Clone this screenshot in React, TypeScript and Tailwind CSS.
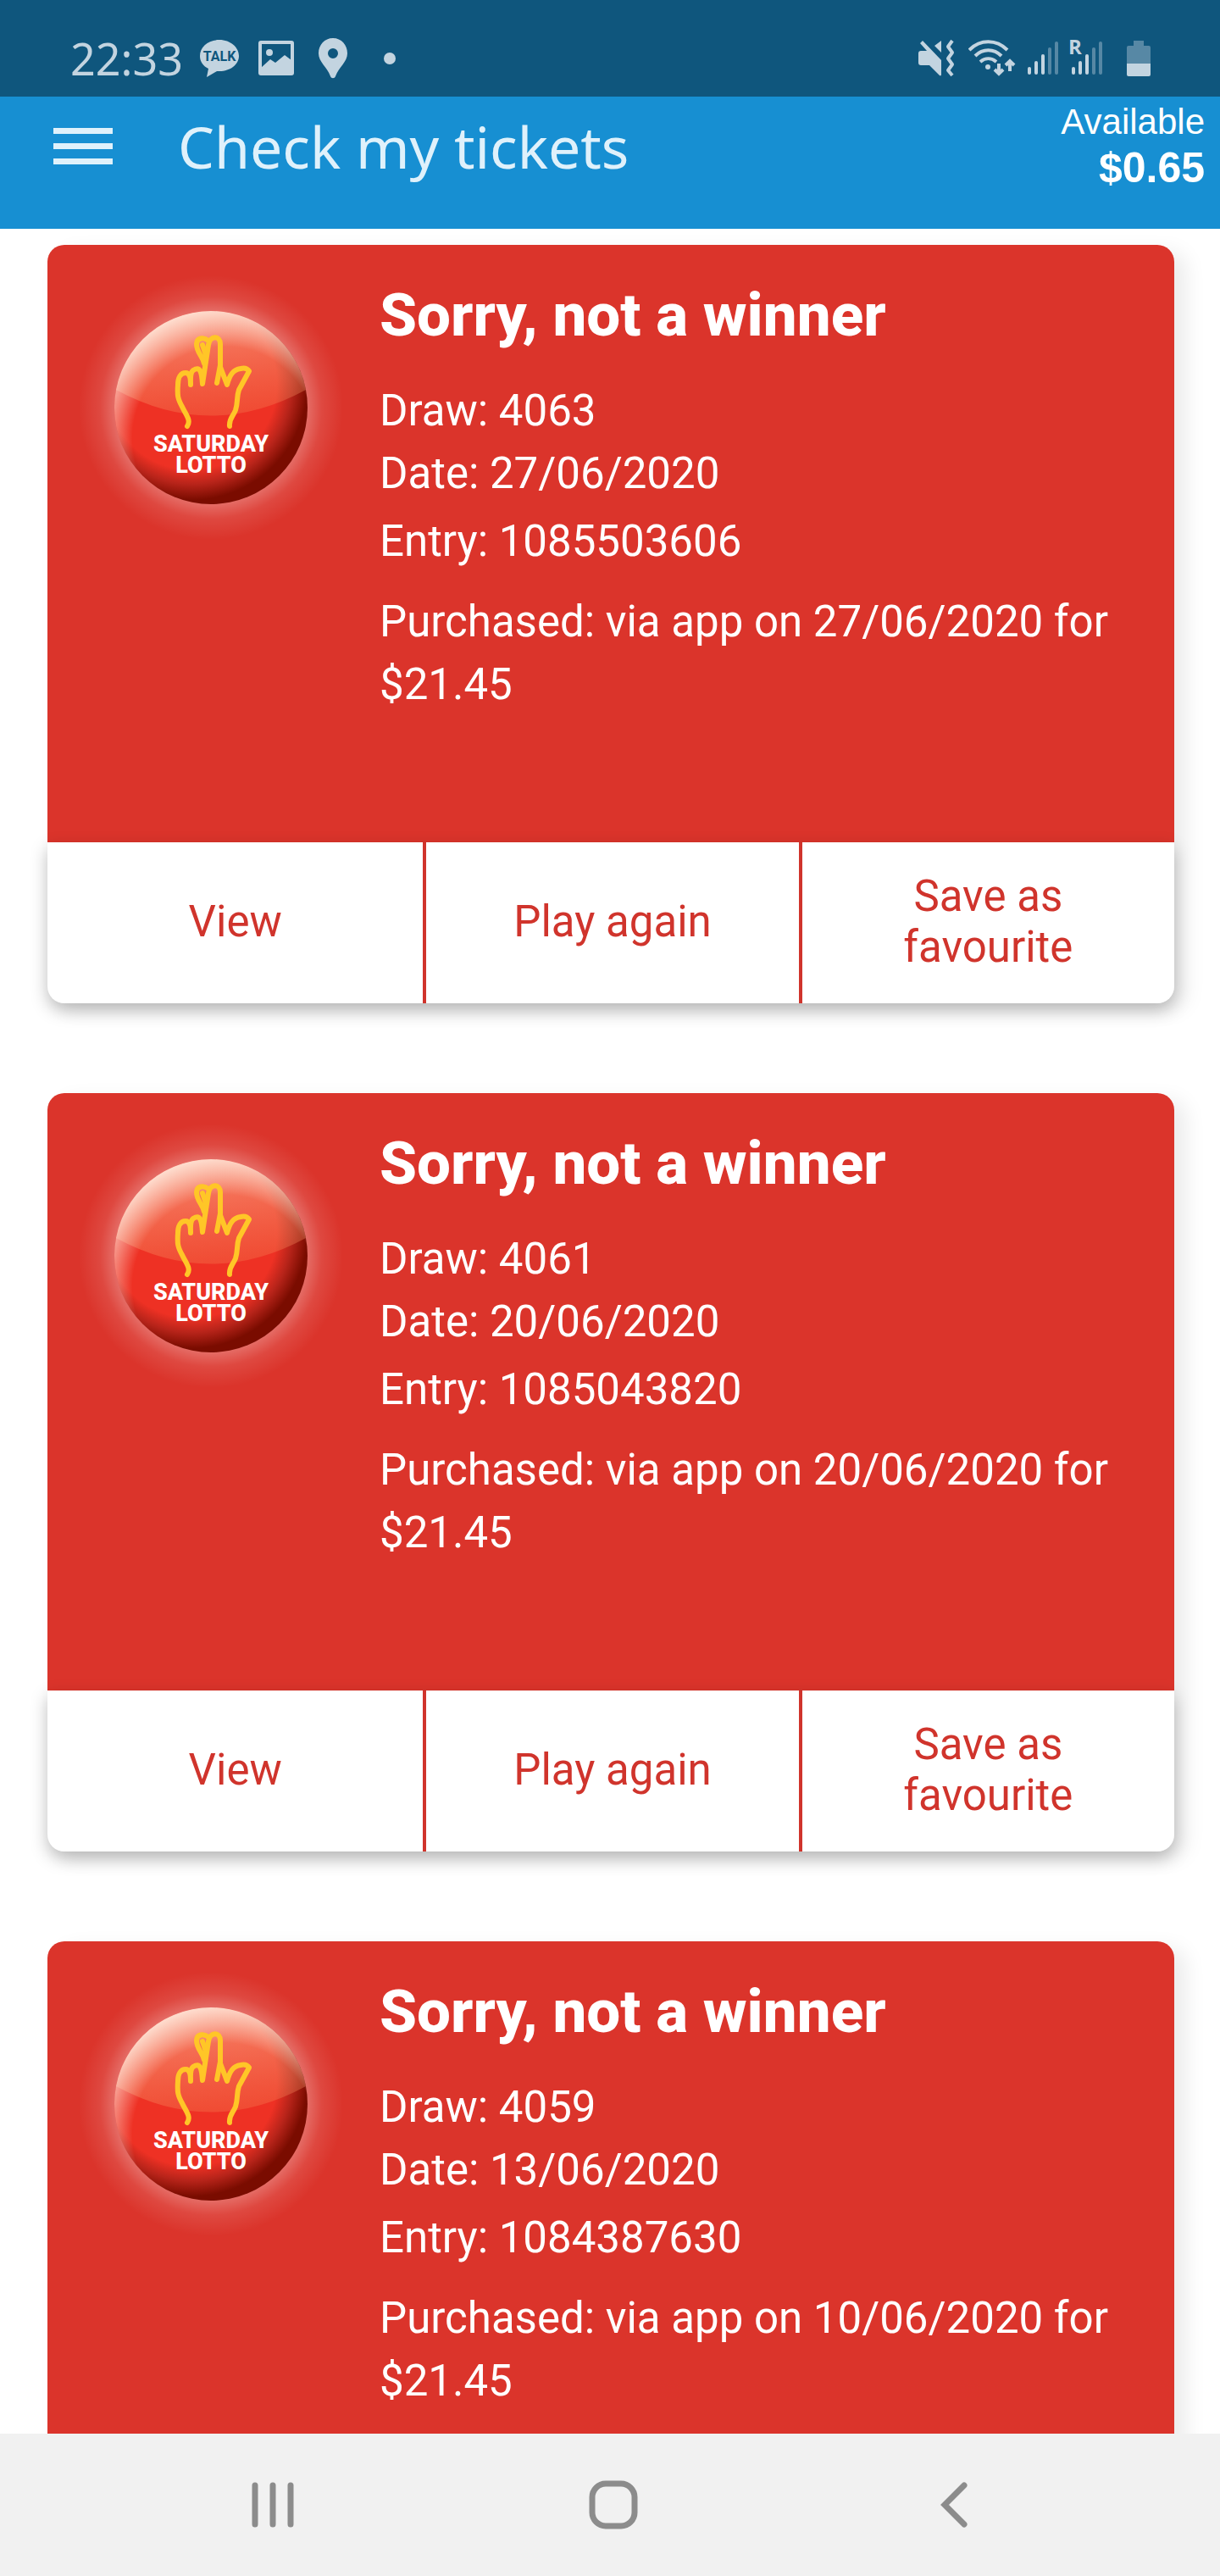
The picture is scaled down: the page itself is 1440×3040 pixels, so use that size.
import React from 'react';

const tickets = [
  { draw: '4063', date: '27/06/2020', entry: '1085503606', purchased: '27/06/2020', price: '$21.45' },
  { draw: '4061', date: '20/06/2020', entry: '1085043820', purchased: '20/06/2020', price: '$21.45' },
  { draw: '4059', date: '13/06/2020', entry: '1084387630', purchased: '10/06/2020', price: '$21.45' },
];

function SignalBars() {
  return (
    <svg width="36" height="42" viewBox="0 0 36 42" fill="currentColor" aria-hidden="true">
      <rect x="0" y="31" width="4" height="9" rx="2" />
      <rect x="8" y="24" width="4" height="16" rx="2" />
      <rect x="16" y="16" width="4" height="24" rx="2" />
      <rect x="24" y="8" width="4" height="32" rx="2" opacity="0.4" />
      <rect x="32" y="1" width="4" height="39" rx="2" opacity="0.4" />
    </svg>
  );
}

function StatusBar() {
  return (
    <div className="flex h-[114px] items-start justify-between bg-[#0f567d] pr-[82px] pl-[83px] text-[#c3d4e0]">
      <div className="mt-[46px] flex h-[46px] items-center">
        <span className="w-[132px] text-[52px] leading-[46px] font-['Noto_Sans',sans-serif]">22:33</span>
        <svg className="ml-[21px]" width="46" height="46" viewBox="0 0 46 46" aria-label="Talk message">
          <path fill="currentColor" d="M23 1C10 1 0 9 0 20c0 7 4 12 10 15L8 45l12-7h3c13 0 23-8 23-18S36 1 23 1Z" />
          <text x="23" y="26" textAnchor="middle" className="fill-[#0f567d] text-[16px] font-bold font-['Roboto',sans-serif]">TALK</text>
        </svg>
        <svg className="ml-[23px]" width="42" height="42" viewBox="0 0 42 42" aria-label="Image">
          <rect x="2" y="2" width="38" height="37" rx="1" fill="none" stroke="currentColor" strokeWidth="4" />
          <path fill="currentColor" d="M3 32l11-10 6 4 11-9 8 6v16H3Z" />
          <circle cx="13" cy="14" r="4" fill="currentColor" />
        </svg>
        <svg className="ml-[28px]" width="36" height="48" viewBox="0 0 36 48" aria-label="Location">
          <path fill="currentColor" fillRule="evenodd" d="M18 0C8 0 1 8 1 18c0 10 10 16 14 27 1 3 5 3 6 0 4-11 14-17 14-27C35 8 28 0 18 0Zm0 12a6 6 0 1 1 0 12 6 6 0 0 1 0-12Z" />
        </svg>
        <span className="ml-[42px] size-[14px] rounded-full bg-[#c3d4e0]" />
      </div>
      <div className="mt-[46px] flex h-[46px] items-center">
        <svg width="43" height="46" viewBox="0 0 43 46" aria-label="Vibrate">
          <path fill="currentColor" d="M5 2 27 25v17c0 1-1 2-2 1L13 31H3c-2 0-3-1-3-3V17c0-2 1-3 3-3h7L2 5ZM27 2v14l-8-8Z" />
          <path fill="none" stroke="currentColor" strokeWidth="4" strokeLinejoin="round" d="m40 2-5 7 5 7-5 7 5 7-5 7 5 6" />
        </svg>
        <svg className="ml-[16px]" width="56" height="46" viewBox="0 0 56 46" fill="none" stroke="currentColor" strokeWidth="4" aria-label="Wi-Fi">
          <path d="M1 13C14 0 33 0 46 13M8 20c9-9 22-9 31 0M14 27c6-5 13-5 19 0" />
          <circle cx="23" cy="33" r="3" fill="currentColor" stroke="none" />
          <path d="M36 29v12M31 36l5 5 5-5M49 38V26M44 31l5-5 5 5" />
        </svg>
        <div className="ml-[14px]"><SignalBars /></div>
        <div className="relative ml-[16px]">
          <SignalBars />
          <span className="absolute -top-1 -left-1 text-[24px] leading-[22px] font-bold font-['Open_Sans',sans-serif]">R</span>
        </div>
        <svg className="ml-[29px]" width="28" height="44" viewBox="0 0 28 44" fill="currentColor" aria-label="Battery">
          <path opacity="0.4" d="M8 1h12v6h6q2 0 2 2v19H0V9q0-2 2-2h6Z" />
          <path d="M0 28h28v13q0 2-2 2H2q-2 0-2-2Z" />
        </svg>
      </div>
    </div>
  );
}

function Header() {
  return (
    <header className="flex h-[156px] items-start bg-[#178fd2] pr-[18px] pl-[63px] text-white">
      <button type="button" aria-label="Menu" className="mt-[37px] flex w-[70px] flex-col gap-[11px]">
        <span className="h-[7px] w-full bg-[#dff1fb]" />
        <span className="h-[7px] w-full bg-[#dff1fb]" />
        <span className="h-[7px] w-full bg-[#dff1fb]" />
      </button>
      <h1 className="mt-[19px] ml-[77px] text-[68px] leading-[80px] text-[#dff1fb] font-['Noto_Sans',sans-serif]">
        Check my tickets
      </h1>
      <div className="ml-auto text-right font-['Liberation_Sans',Arial,sans-serif]">
        <p className="mt-[4px] text-[42px] leading-[52px]">Available</p>
        <p className="text-[50px] leading-[56px] font-bold">$0.65</p>
      </div>
    </header>
  );
}

function LottoBall() {
  return (
    <svg className="size-[312px] shrink-0" viewBox="0 0 312 312" role="img" aria-label="Saturday Lotto">
      <defs>
        <radialGradient id="halo">
          <stop offset="0.7" stopColor="#fff" stopOpacity="0.32" />
          <stop offset="0.84" stopColor="#fff" stopOpacity="0.1" />
          <stop offset="1" stopColor="#fff" stopOpacity="0" />
        </radialGradient>
        <radialGradient id="ball" cx="0.4" cy="0.38" r="0.63">
          <stop offset="0.7" stopColor="#ee3124" />
          <stop offset="0.82" stopColor="#b8241a" />
          <stop offset="0.95" stopColor="#7a0c00" />
        </radialGradient>
        <linearGradient id="gloss" x1="0.3" y1="0" x2="0.5" y2="1">
          <stop offset="0" stopColor="#ffc8a8" stopOpacity="0.6" />
          <stop offset="1" stopColor="#f58a58" stopOpacity="0.3" />
        </linearGradient>
        <radialGradient id="rim" cx="0.57" cy="0.66" r="0.68">
          <stop offset="0.7" stopColor="#ffeadd" stopOpacity="0" />
          <stop offset="0.98" stopColor="#ffeadd" stopOpacity="0.85" />
        </radialGradient>
      </defs>
      <circle cx="156" cy="156" r="156" fill="url(#halo)" />
      <circle cx="156" cy="156" r="114" fill="url(#ball)" />
      <path fill="url(#gloss)" d="M44 135a114 114 0 0 1 224 0Q156 196 44 135Z" />
      <circle cx="156" cy="156" r="114" fill="url(#rim)" />
      <g fill="none" stroke="#ffc627" strokeWidth="6" strokeLinecap="round" strokeLinejoin="round">
        <path d="M128 178c5-7-2-14-6-23-5-9-6-13-5-26 0-8 3-14 9-14 5 0 6 5 6 14 0-8-1-14 3-17 8-5 10 1 11 16l7-46c2-12 14-11 14-1v27l8 21c3-11 7-18 16-19 4-1 8 0 10 3l-12 22c-3 9-1 15-4 24-3 8-8 10-7 19" />
        <path d="M167 106l-4 21M148 104c-2-9-9-13-9-23 0-7 8-9 14-4M150 94l-4-12" />
      </g>
      <text textAnchor="middle" className="fill-white text-[27px] font-extrabold font-['Roboto',sans-serif]">
        <tspan x="156" y="208">SATURDAY</tspan>
        <tspan x="156" y="233">LOTTO</tspan>
      </text>
    </svg>
  );
}

function TicketCard({ ticket }: { ticket: (typeof tickets)[number] }) {
  return (
    <article className="mb-[106px] shrink-0 rounded-[20px] shadow-[14px_8px_24px_rgba(0,0,0,0.08)]">
      <div className="flex min-h-[705px] rounded-t-[20px] bg-[#db342b] pl-[37px] text-white">
        <div className="pt-[36px]"><LottoBall /></div>
        <div className="ml-[43px] flex-1 pt-[43px] pr-[40px] text-[51px] leading-[74px]">
          <h2 className="text-[71px] leading-[80px] font-extrabold">Sorry, not a winner</h2>
          <p className="mt-[36px]">Draw: {ticket.draw}</p>
          <p>Date: {ticket.date}</p>
          <p className="mt-[6px]">Entry: {ticket.entry}</p>
          <p className="mt-[21px]">
            Purchased: via app on {ticket.purchased} for {ticket.price}
          </p>
        </div>
      </div>
      <div className="grid h-[190px] grid-cols-3 rounded-b-[20px] bg-white text-[51px] leading-[60px] text-[#d0342c] shadow-[0_8px_20px_rgba(0,0,0,0.25)]">
        <button type="button" className="pb-[2px]">View</button>
        <button type="button" className="border-l-4 border-[#d0342c] pb-[2px]">Play again</button>
        <button type="button" className="border-l-4 border-[#d0342c] px-[80px] pb-[2px]">Save as favourite</button>
      </div>
    </article>
  );
}

function NavBar() {
  return (
    <nav className="flex h-[168px] shrink-0 items-center justify-around bg-[#f1f1f1] pr-[113px] pl-[121px] text-[#8c8c8c]">
      <button type="button" aria-label="Recent apps">
        <svg width="58" height="58" viewBox="0 0 58 58" stroke="currentColor" strokeWidth="7" strokeLinecap="round">
          <path d="M8 6v46M29 6v46M50 6v46" />
        </svg>
      </button>
      <button type="button" aria-label="Home">
        <svg width="58" height="58" viewBox="0 0 58 58" fill="none" stroke="currentColor" strokeWidth="7">
          <rect x="4" y="4" width="50" height="50" rx="16" />
        </svg>
      </button>
      <button type="button" aria-label="Back">
        <svg width="58" height="58" viewBox="0 0 58 58" fill="none" stroke="currentColor" strokeWidth="7" strokeLinecap="round">
          <path d="M41 6 18 29l23 23" />
        </svg>
      </button>
    </nav>
  );
}

export default function App() {
  return (
    <div className="flex h-screen flex-col overflow-hidden bg-white font-['Roboto',sans-serif]">
      <StatusBar />
      <Header />
      <main className="flex min-h-0 flex-1 flex-col overflow-hidden pt-[19px] pr-[54px] pl-[56px]">
        {tickets.map((ticket) => (
          <TicketCard key={ticket.draw} ticket={ticket} />
        ))}
      </main>
      <NavBar />
    </div>
  );
}
